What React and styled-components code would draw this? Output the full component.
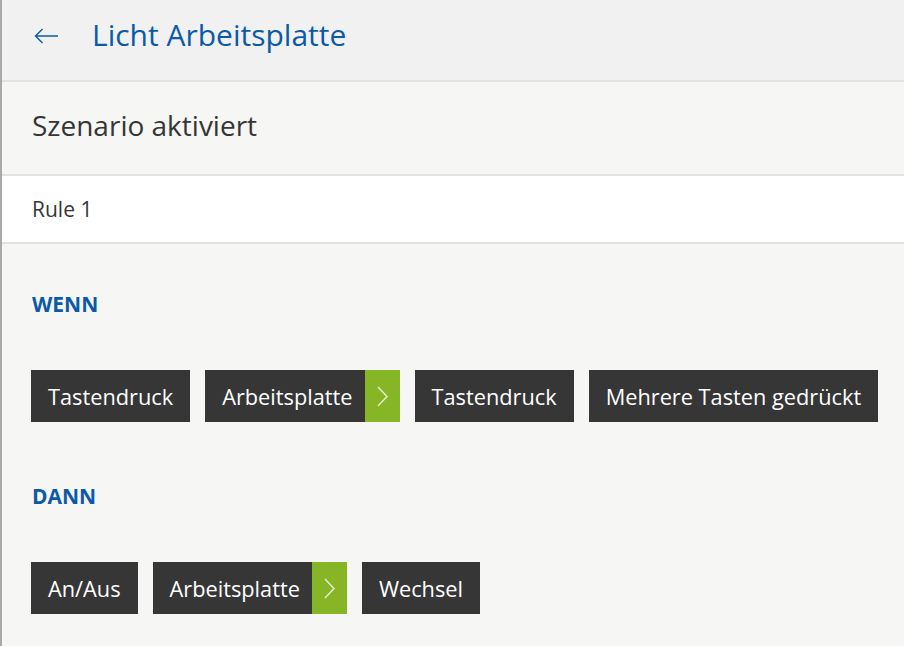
import styled, { createGlobalStyle } from 'styled-components';

const colors = {
  blue: '#0b5aa7',
  text: '#353535',
  chip: '#363636',
  green: '#86b526',
  line: '#e2e2e2',
  header: '#f1f1f1',
  body: '#f6f6f4',
};

const rules = [
  {
    label: 'WENN',
    chips: [
      { text: 'Tastendruck' },
      { text: 'Arbeitsplatte', link: true },
      { text: 'Tastendruck' },
      { text: 'Mehrere Tasten gedrückt' },
    ],
  },
  {
    label: 'DANN',
    chips: [
      { text: 'An/Aus' },
      { text: 'Arbeitsplatte', link: true },
      { text: 'Wechsel' },
    ],
  },
];

const GlobalStyle = createGlobalStyle`
  html, body {
    margin: 0;
    padding: 0;
    background: ${colors.body};
  }
  body {
    font-family: "Open Sans", "Noto Sans", sans-serif;
  }
`;

function Chevron() {
  return (
    <svg width="11" height="21" viewBox="0 0 11 21" fill="none">
      <path d="M1 1 L10 10.5 L1 20" stroke="#e6f0d2" strokeWidth="1.4" />
    </svg>
  );
}

function BackArrow() {
  return (
    <svg width="24" height="16" viewBox="0 0 24 16" fill="none">
      <path d="M24 8 H1.5 M8.5 1 L1.5 8 L8.5 15" stroke={colors.blue} strokeWidth="1.4" />
    </svg>
  );
}

function App() {
  return (
    <Page>
      <GlobalStyle />
      <Header>
        <BackButton>
          <BackArrow />
        </BackButton>
        <Title>Licht Arbeitsplatte</Title>
      </Header>
      <StatusRow>Szenario aktiviert</StatusRow>
      <RuleRow>Rule 1</RuleRow>
      <Content>
        {rules.map((rule) => (
          <Block key={rule.label}>
            <BlockLabel>{rule.label}</BlockLabel>
            <ChipList>
              {rule.chips.map((chip, index) => (
                <Chip key={index}>
                  <ChipText $link={chip.link}>{chip.text}</ChipText>
                  {chip.link && (
                    <ChipLink>
                      <Chevron />
                    </ChipLink>
                  )}
                </Chip>
              ))}
            </ChipList>
          </Block>
        ))}
      </Content>
    </Page>
  );
}

const Page = styled.div`
  min-height: 646px;
  border-left: 2px solid #a9a9a9;
  background: ${colors.body};
  box-sizing: border-box;
`;

const Header = styled.div`
  display: flex;
  align-items: center;
  height: 69px;
  padding: 0 0 11px 32px;
  background: ${colors.header};
  border-bottom: 2px solid ${colors.line};
`;

const BackButton = styled.div`
  display: flex;
  align-items: center;
  width: 58px;
  margin-top: 2px;
`;

const Title = styled.h1`
  margin: 0;
  font-size: 30px;
  line-height: 40px;
  font-weight: 400;
  color: ${colors.blue};
`;

const StatusRow = styled.div`
  display: flex;
  align-items: center;
  height: 86px;
  padding: 0 0 6px 30px;
  font-size: 28px;
  color: ${colors.text};
  border-bottom: 2px solid ${colors.line};
`;

const RuleRow = styled.div`
  display: flex;
  align-items: center;
  height: 66px;
  padding-left: 30px;
  font-size: 21px;
  color: ${colors.text};
  background: #fff;
  border-bottom: 2px solid ${colors.line};
`;

const Content = styled.div`
  padding: 46px 0 0 29px;
  display: flex;
  flex-direction: column;
  gap: 60px;
`;

const Block = styled.div`
  display: flex;
  flex-direction: column;
  gap: 52px;
`;

const BlockLabel = styled.div`
  padding-left: 1px;
  font-size: 21px;
  font-weight: 700;
  line-height: 28px;
  color: ${colors.blue};
`;

const ChipList = styled.div`
  display: flex;
  gap: 15px;
`;

const Chip = styled.div`
  display: flex;
  height: 52px;
  background: ${colors.chip};
`;

const ChipText = styled.span`
  display: flex;
  align-items: center;
  padding: 0 ${(p) => (p.$link ? '12px' : '17px')} 0 17px;
  font-size: 21.75px;
  color: #fff;
`;

const ChipLink = styled.span`
  display: flex;
  align-items: center;
  justify-content: center;
  width: 35px;
  background: ${colors.green};
`;

export default App;
